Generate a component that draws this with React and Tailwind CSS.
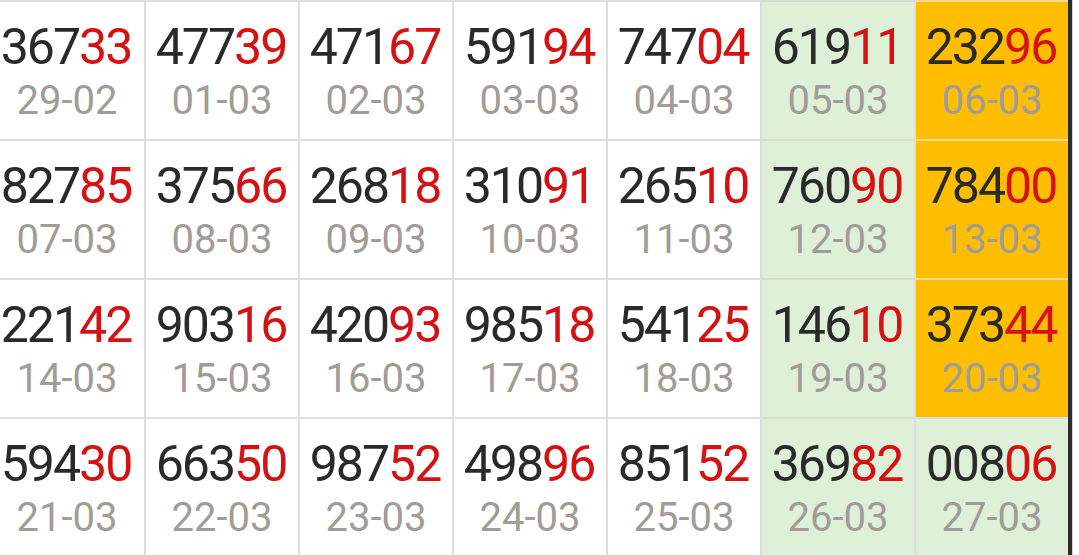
import React from "react";

const rows = [
  [["36733","29-02"],["47739","01-03"],["47167","02-03"],["59194","03-03"],["74704","04-03"],["61911","05-03"],["23296","06-03"]],
  [["82785","07-03"],["37566","08-03"],["26818","09-03"],["31091","10-03"],["26510","11-03"],["76090","12-03"],["78400","13-03"]],
  [["22142","14-03"],["90316","15-03"],["42093","16-03"],["98518","17-03"],["54125","18-03"],["14610","19-03"],["37344","20-03"]],
  [["59430","21-03"],["66350","22-03"],["98752","23-03"],["49896","24-03"],["85152","25-03"],["36982","26-03"],["00806","27-03"]],
];

function cellKind(r, c) {
  if (c === 6 && r < 3) return "orange";
  if (c >= 5) return "green";
  return "white";
}

const bgClass = {
  white: "bg-white border-t-[#dddddd]",
  green: "bg-[#dff0d8] border-t-[#d6ddd3]",
  orange: "bg-[#ffbf00] border-t-[#f6dc98]",
};

function Cell({ num, date, kind, first }) {
  return (
    <div
      className={`h-[139px] border-t-2 flex flex-col items-center pt-[20px] ${
        first ? "pr-[10px]" : "border-l-2 border-l-[#dddddd]"
      } ${bgClass[kind]}`}
    >
      <div className="text-[50px] leading-none tracking-[-2px] text-[#2a2a2a] -ml-[2px]">
        {num.slice(0, 3)}
        <span className="text-[#d51111]">{num.slice(3)}</span>
      </div>
      <div className="mt-[9px] text-[40px] leading-none text-[#a09c97]">{date}</div>
    </div>
  );
}

export default function App() {
  return (
    <div
      className="w-[1079px] h-[555px] overflow-hidden bg-white flex"
      style={{ fontFamily: "Roboto, 'Noto Sans', sans-serif" }}
    >
      <div className="w-[1068px] shrink-0 flex flex-col">
        <div className="grid grid-cols-[144px_repeat(6,154px)] h-[3px]">
          {Array.from({ length: 7 }).map((_, c) => (
            <div
              key={c}
              className={`${c > 0 ? "border-l-2 border-l-[#dddddd]" : ""} ${c >= 5 ? "bg-[#dff0d8]" : "bg-white"}`}
            />
          ))}
        </div>
        {rows.map((row, r) => (
          <div key={r} className="grid grid-cols-[144px_repeat(6,154px)]">
            {row.map(([n, d], c) => (
              <Cell key={c} num={n} date={d} kind={cellKind(r, c)} first={c === 0} />
            ))}
          </div>
        ))}
      </div>
      <div className="w-[4px] shrink-0 bg-[#2c2c2c]" />
      <div className="w-[1px] shrink-0 bg-[#d4d4d4]" />
      <div className="grow bg-white" />
    </div>
  );
}
